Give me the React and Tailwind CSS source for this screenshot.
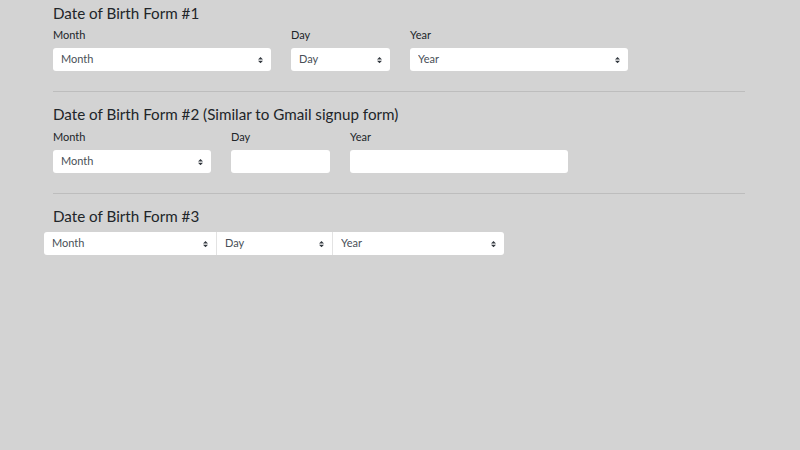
import React from "react";

function Arrow() {
  return (
    <svg className="absolute right-[8px] top-1/2 -translate-y-1/2 pointer-events-none" width="5" height="7" viewBox="0 0 4 5">
      <path fill="#343a40" d="M2 0L0 2h4zm0 5L0 3h4z" />
    </svg>
  );
}

function Select({ label, className = "", rounded = "rounded-[3px]" }) {
  return (
    <div className={`relative ${className}`}>
      <select
        defaultValue=""
        className={`block w-full h-[23px] appearance-none bg-white ${rounded} pl-[8px] pr-[20px] text-[11px] text-[#495057] outline-none`}
      >
        <option value="">{label}</option>
      </select>
      <Arrow />
    </div>
  );
}

function Field({ label, children, width }) {
  return (
    <div className={width}>
      <div className="text-[11px] leading-[16px] text-[#212529] mb-[5px]">{label}</div>
      {children}
    </div>
  );
}

function Heading({ children }) {
  return <h5 className="text-[15.2px] leading-[22px] text-[#212529]">{children}</h5>;
}

export default function App() {
  return (
    <div
      className="min-h-screen bg-[#d3d3d3]"
      style={{ fontFamily: "Lato, 'Noto Sans', sans-serif" }}
    >
      <div className="ml-[53px] w-[694px] pt-[2px]">
        <section>
          <Heading>Date of Birth Form #1</Heading>
          <div className="flex gap-[20px] mt-[3px]">
            <Field label="Month" width="w-[218px]">
              <Select label="Month" />
            </Field>
            <Field label="Day" width="w-[99px]">
              <Select label="Day" />
            </Field>
            <Field label="Year" width="w-[218px]">
              <Select label="Year" />
            </Field>
          </div>
        </section>

        <hr className="mt-[20px] mb-[11px] border-0 border-t border-[#bdbdbd] w-[692px]" />

        <section>
          <Heading>Date of Birth Form #2 (Similar to Gmail signup form)</Heading>
          <div className="flex gap-[20px] mt-[4px]">
            <Field label="Month" width="w-[158px]">
              <Select label="Month" />
            </Field>
            <Field label="Day" width="w-[99px]">
              <input className="block w-full h-[23px] bg-white rounded-[3px] outline-none" />
            </Field>
            <Field label="Year" width="w-[218px]">
              <input className="block w-full h-[23px] bg-white rounded-[3px] outline-none" />
            </Field>
          </div>
        </section>

        <hr className="mt-[20px] mb-[11px] border-0 border-t border-[#bdbdbd] w-[692px]" />

        <section>
          <Heading>Date of Birth Form #3</Heading>
          <div className="flex mt-[5px] -ml-[9px] w-[460px]">
            <Select label="Month" className="w-[172px]" rounded="rounded-l-[3px]" />
            <Select label="Day" className="w-[116px] border-l border-[#e3e3e3]" rounded="rounded-none" />
            <Select label="Year" className="w-[172px] border-l border-[#e3e3e3]" rounded="rounded-r-[3px]" />
          </div>
        </section>
      </div>
    </div>
  );
}
